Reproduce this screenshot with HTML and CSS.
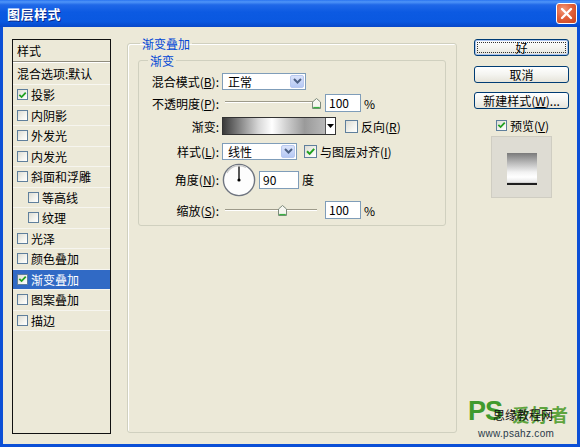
FILE: index.html
```html
<!DOCTYPE html>
<html lang="zh-CN">
<head>
<meta charset="utf-8">
<title>图层样式</title>
<link rel="stylesheet" href="styles.css">
</head>
<body>
<div class="window">
  <div class="titlebar">
    <span class="title">图层样式</span>
    <span class="close"><svg width="13" height="13" viewBox="0 0 13 13"><path d="M2 2L11 11M11 2L2 11" stroke="#fff" stroke-width="2.4" stroke-linecap="round"/></svg></span>
  </div>
  <div class="frame">
    <div class="list">
      <div class="head">样式</div>
      <div class="mix">混合选项:默认</div>
      <div class="item"><span class="cb checked"><svg width="10" height="10" viewBox="0 0 10 10"><path d="M1.5 4.8L4 7.3L8.6 2.4" fill="none" stroke="#21a121" stroke-width="2"/></svg></span>投影</div>
      <div class="item"><span class="cb"></span>内阴影</div>
      <div class="item"><span class="cb"></span>外发光</div>
      <div class="item"><span class="cb"></span>内发光</div>
      <div class="item"><span class="cb"></span>斜面和浮雕</div>
      <div class="item sub"><span class="cb"></span>等高线</div>
      <div class="item sub"><span class="cb"></span>纹理</div>
      <div class="item"><span class="cb"></span>光泽</div>
      <div class="item"><span class="cb"></span>颜色叠加</div>
      <div class="item selected"><span class="cb checked"><svg width="10" height="10" viewBox="0 0 10 10"><path d="M1.5 4.8L4 7.3L8.6 2.4" fill="none" stroke="#21a121" stroke-width="2"/></svg></span>渐变叠加</div>
      <div class="item"><span class="cb"></span>图案叠加</div>
      <div class="item"><span class="cb"></span>描边</div>
    </div>

    <fieldset class="group outer">
      <legend>渐变叠加</legend>
      <fieldset class="group inner">
        <legend>渐变</legend>
        <div class="row r1">
          <label class="lbl">混合模式(<u>B</u>):</label>
          <div class="select w84"><span class="val">正常</span><span class="arrow"><svg width="9" height="6" viewBox="0 0 9 6"><path d="M1 1L4.5 4.5L8 1" fill="none" stroke="#4d6185" stroke-width="2"/></svg></span></div>
        </div>
        <div class="row r2">
          <label class="lbl">不透明度(<u>P</u>):</label>
          <div class="slider"><span class="track"></span><span class="thumb" style="left:90px"><svg width="9" height="11" viewBox="0 0 9 11"><path d="M0.5 10.5V4L4.5 0.5L8.5 4V10.5Z" fill="#f6f6f0" stroke="#7d8a7d"/><path d="M1.2 9.6H7.8" stroke="#3cb043" stroke-width="1.4"/></svg></span></div>
          <div class="input w36">100</div>
          <span class="unit">%</span>
        </div>
        <div class="row r3">
          <label class="lbl">渐变:</label>
          <div class="gradbar"><span class="grad"></span><span class="gdrop"><svg width="7" height="4" viewBox="0 0 7 4"><path d="M0 0H7L3.5 4Z" fill="#000"/></svg></span></div>
          <span class="cb big"></span><span class="cbtext">反向(<u>R</u>)</span>
        </div>
        <div class="row r4">
          <label class="lbl">样式(<u>L</u>):</label>
          <div class="select w75"><span class="val">线性</span><span class="arrow"><svg width="9" height="6" viewBox="0 0 9 6"><path d="M1 1L4.5 4.5L8 1" fill="none" stroke="#4d6185" stroke-width="2"/></svg></span></div>
          <span class="cb big checked gap7"><svg width="11" height="11" viewBox="0 0 11 11"><path d="M2 5.3L4.6 7.9L9.2 2.8" fill="none" stroke="#21a121" stroke-width="2"/></svg></span><span class="cbtext">与图层对齐(<u>I</u>)</span>
        </div>
        <div class="row r5">
          <label class="lbl">角度(<u>N</u>):</label>
          <span class="dial"><svg width="34" height="34" viewBox="0 0 34 34"><circle cx="17" cy="17" r="15.6" fill="#fdfdfd" stroke="#6f7580" stroke-width="1.4"/><path d="M5 10A13.5 13.5 0 0 1 24 4.5" fill="none" stroke="#c9c9c9" stroke-width="1.2"/><path d="M17 17V3.5" stroke="#000" stroke-width="1.3"/><circle cx="17" cy="17" r="1.6" fill="#000"/></svg></span>
          <div class="input w40">90</div>
          <span class="unit">度</span>
        </div>
        <div class="row r6">
          <label class="lbl">缩放(<u>S</u>):</label>
          <div class="slider"><span class="track"></span><span class="thumb" style="left:56px"><svg width="9" height="11" viewBox="0 0 9 11"><path d="M0.5 10.5V4L4.5 0.5L8.5 4V10.5Z" fill="#f6f6f0" stroke="#7d8a7d"/><path d="M1.2 9.6H7.8" stroke="#3cb043" stroke-width="1.4"/></svg></span></div>
          <div class="input w36">100</div>
          <span class="unit">%</span>
        </div>
      </fieldset>
    </fieldset>

    <div class="side">
      <button class="btn default"><span class="focus">好</span></button>
      <button class="btn b2">取消</button>
      <button class="btn b3"><span>新建样式(<u>W</u>)...</span></button>
      <div class="preview-check"><span class="cb checked"><svg width="10" height="10" viewBox="0 0 10 10"><path d="M1.5 4.8L4 7.3L8.6 2.4" fill="none" stroke="#21a121" stroke-width="2"/></svg></span><span class="ptext">预览(<u>V</u>)</span></div>
      <div class="preview"><span class="swatch"></span></div>
    </div>
  </div>

  <div class="watermark">
    <span class="wm-ps">PS</span>
    <span class="wm-name">爱好者</span>
    <span class="wm-over">思缘教程网</span>
    <span class="wm-url">www.psahz.com</span>
  </div>
</div>
</body>
</html>
```
FILE: styles.css
```css
* { box-sizing: border-box; }
html, body { margin: 0; padding: 0; }
body {
  width: 580px;
  height: 447px;
  overflow: hidden;
  background: #ece9d8;
  font-family: "Noto Sans CJK SC", "Liberation Sans", sans-serif;
  font-size: 12px;
  color: #000;
}
u { text-decoration: underline; text-underline-offset: 1px; }

.window {
  width: 580px;
  height: 447px;
  display: flex;
  flex-direction: column;
  position: relative;
}

.titlebar {
  height: 27px;
  flex: none;
  display: flex;
  align-items: center;
  justify-content: space-between;
  padding: 0 3px 1px 7px;
  background: linear-gradient(#2a74f0 0%, #4f95f8 7%, #2068e8 18%, #0c5ae2 45%, #0a58e0 80%, #0848c9 100%);
}
.title {
  color: #fff;
  font-weight: bold;
  font-size: 13px;
  letter-spacing: 0.5px;
  text-shadow: 1px 1px 0 #0c2a8a;
}
.close {
  width: 21px;
  height: 21px;
  border: 1px solid #fff;
  border-radius: 3px;
  background: radial-gradient(circle at 35% 30%, #f29a7c 0%, #e2623c 45%, #c9421d 100%);
  display: flex;
  align-items: center;
  justify-content: center;
}

.frame {
  flex: 1;
  display: flex;
  align-items: stretch;
  border: 3px solid #0b4fd6;
  border-top: 0;
  padding: 8px 8px 10px 9px;
}

/* left style list */
.list {
  width: 99px;
  flex: none;
  margin-top: 4px;
  border: 1px solid #111;
  display: flex;
  flex-direction: column;
}
.list .head {
  height: 22px;
  line-height: 21px;
  padding-left: 4px;
  border-bottom: 1px solid #8f8c7e;
}
.list .mix {
  height: 23px;
  line-height: 22px;
  padding-left: 4px;
  border-top: 1px solid #fff;
  border-bottom: 1px solid #f8f7f1;
}
.list .item {
  height: 20.5px;
  display: flex;
  align-items: center;
  padding-left: 4px;
  gap: 3px;
  border-bottom: 1px solid #f6f5ef;
}
.list .item.sub { padding-left: 15px; }
.list .item.selected {
  background: #316ac5;
  color: #fff;
}

.cb {
  width: 11px;
  height: 11px;
  flex: none;
  border: 1px solid #5f7f9c;
  background: linear-gradient(135deg, #dcdcd4 0%, #f4f4ef 60%, #fff 100%);
  display: inline-flex;
  align-items: center;
  justify-content: center;
}
.cb.big { width: 13px; height: 13px; }
.cb svg { display: block; }

/* group boxes */
.group {
  margin: 0;
  border: 1px solid #d0d0bf;
  border-radius: 3px;
  min-width: 0;
}
.group > legend {
  color: #0046d5;
  line-height: 17px;
  padding: 0 2px;
}
.outer {
  width: 330px;
  flex: none;
  margin-left: 16px;
  margin-bottom: 1px;
  padding: 0 10px 10px 10px;
  box-shadow: inset 1px 1px 0 #fff;
}
.outer > legend { margin-left: 2px; }
.inner {
  padding: 3px 0 6px 0;
  width: 308px;
}
.inner > legend { margin-left: 9px; }

.row {
  display: flex;
  align-items: center;
  height: 18px;
}
.r2 { margin-top: 4px; }
.r3 { margin-top: 5px; }
.r4 { margin-top: 7px; }
.r5 { margin-top: 3px; height: 33px; }
.r6 { margin-top: 5px; }

.lbl {
  width: 80px;
  flex: none;
  text-align: right;
  margin-right: 3px;
  white-space: nowrap;
}

.select {
  height: 17px;
  border: 1px solid #7f9db9;
  background: #fff;
  display: flex;
  align-items: stretch;
  justify-content: space-between;
  padding: 1px;
}
.select .val { padding-left: 4px; line-height: 14px; }
.select .arrow {
  width: 14px;
  border: 1px solid #b9c9ef;
  border-radius: 2px;
  background: linear-gradient(#dbe4fb, #b5c8f4);
  display: flex;
  align-items: center;
  justify-content: center;
}
.w84 { width: 84px; }
.w75 { width: 75px; }

.slider {
  position: relative;
  width: 101px;
  height: 18px;
  flex: none;
  display: flex;
  align-items: flex-start;
  padding: 7px 6px 0 3px;
}
.track {
  flex: 1;
  height: 2px;
  border-top: 1px solid #9d9a8a;
  border-bottom: 1px solid #fff;
}
.thumb {
  position: absolute;
  top: 4px;
  width: 9px;
  height: 11px;
}
.thumb svg { display: block; }
.r6 .slider { padding-top: 8px; }
.r6 .thumb { top: 4px; }

.input {
  height: 18px;
  border: 1px solid #7f9db9;
  background: #fff;
  padding-left: 3px;
  line-height: 16px;
  margin-left: 2px;
}
.w36 { width: 36px; }
.w40 { width: 40px; margin-left: 3px; }
.unit { margin-left: 3px; }

.gradbar {
  width: 114px;
  height: 18px;
  border: 1px solid #333;
  display: flex;
  margin-right: 9px;
}
.grad {
  flex: 1;
  background: linear-gradient(to right, #3a3a3a 0%, #8c8c8c 18%, #d8d8d8 35%, #ffffff 48%, #d0d0d0 62%, #9a9a9a 80%, #b8b8b8 100%);
}
.gdrop {
  width: 10px;
  border-left: 1px solid #555;
  background: #fff;
  display: flex;
  align-items: center;
  justify-content: center;
}
.cbtext { margin-left: 3px; white-space: nowrap; }
.gap7 { margin-left: 7px; }

.dial { width: 34px; height: 34px; flex: none; }
.dial svg { display: block; }

/* right side */
.side {
  width: 95px;
  flex: none;
  margin-left: 17px;
  margin-top: 4px;
  display: flex;
  flex-direction: column;
  align-items: center;
}
.btn {
  width: 95px;
  height: 17px;
  padding: 0;
  border: 1px solid #003c74;
  border-radius: 3px;
  background: linear-gradient(#ffffff 0%, #f4f4f0 50%, #e6e4da 100%);
  font: inherit;
  color: #000;
  line-height: 14px;
  display: flex;
  align-items: center;
  justify-content: center;
}
.btn.default {
  box-shadow: inset 0 0 0 1px #a9c3f0;
  padding: 2px;
}
.btn.default .focus {
  width: 100%;
  height: 100%;
  border: 1px dotted #333;
  display: flex;
  align-items: center;
  justify-content: center;
}
.b2 { margin-top: 10px; }
.b3 { margin-top: 9px; }
.preview-check {
  margin-top: 9px;
  height: 14px;
  display: flex;
  align-items: center;
  gap: 3px;
  padding-left: 2px;
}
.ptext { white-space: nowrap; }
.preview {
  margin-top: 4px;
  width: 61px;
  height: 62px;
  border: 1px solid #cfcdc2;
  background: #dedcd3;
  display: flex;
  align-items: center;
  justify-content: center;
  padding-top: 3px;
}
.swatch {
  width: 30px;
  height: 32px;
  background: linear-gradient(#7a7a7a 0%, #b8b8b8 30%, #f2f2f2 60%, #ffffff 75%, #e6e6e6 92%, #1e1e1e 94%, #1e1e1e 100%);
}

/* watermark overlay */
.watermark {
  position: absolute;
  left: 466px;
  top: 400px;
  width: 108px;
  height: 42px;
}
.wm-ps {
  position: absolute;
  left: 2px;
  top: -4px;
  font-family: "Liberation Sans", sans-serif;
  font-weight: bold;
  font-size: 27px;
  color: #3f9a2c;
  letter-spacing: -1px;
}
.wm-name {
  position: absolute;
  left: 46px;
  top: 1px;
  font-size: 18px;
  font-weight: bold;
  color: #5ea43e;
  letter-spacing: 1px;
}
.wm-over {
  position: absolute;
  left: 27px;
  top: 6px;
  font-size: 12px;
  color: #111;
}
.wm-url {
  position: absolute;
  left: 12px;
  top: 28px;
  font-family: "Liberation Sans", sans-serif;
  font-size: 10px;
  color: #2a3a4a;
  letter-spacing: 0.3px;
}
```
